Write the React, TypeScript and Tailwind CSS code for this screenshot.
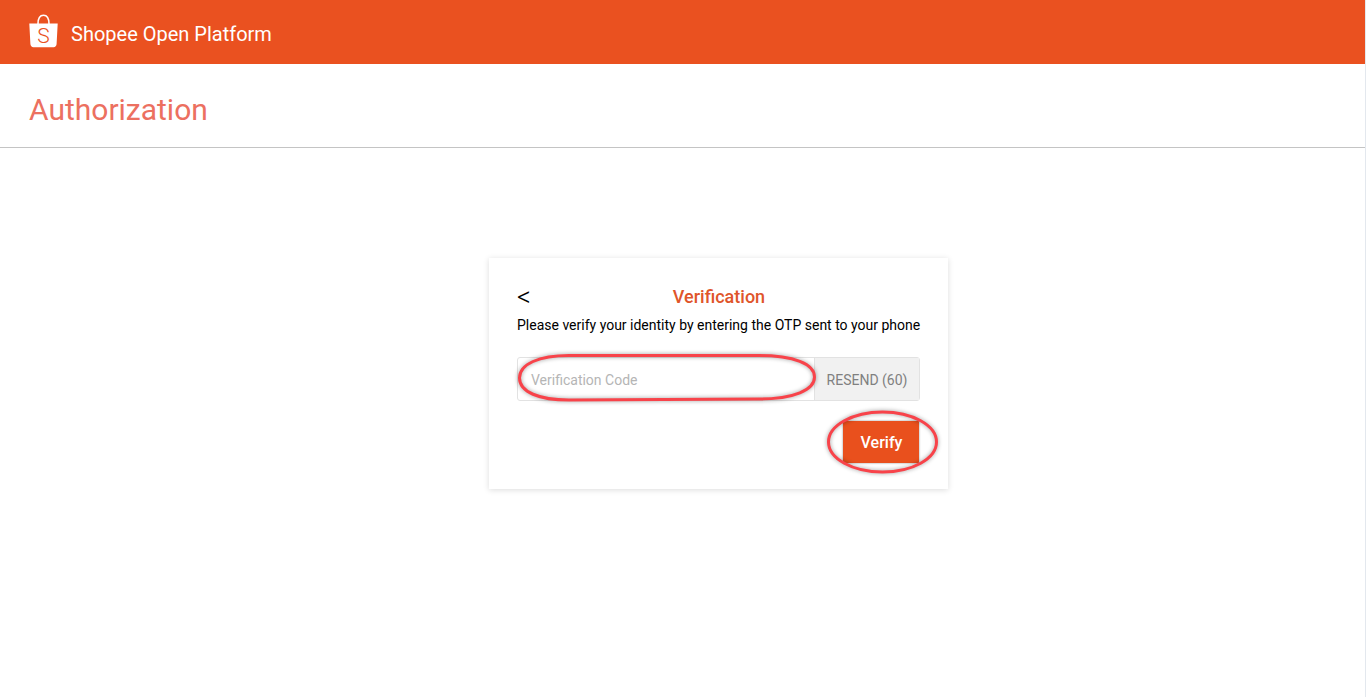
export default function App() {
  return (
    <div className="relative h-[697px] w-[1366px] overflow-hidden bg-white font-['Roboto',sans-serif]">
      <div className="h-full w-[1365px]">
        <header className="flex h-16 items-center bg-[#ea5120] pl-[29px] text-white">
          <svg width="29" height="34" viewBox="0 0 29 34" className="mb-[3px]" aria-hidden="true">
            <path d="M9 10 C9 4 11 1.2 14.5 1.2 C18 1.2 20 4 20 10" fill="none" stroke="#fff" strokeWidth="1.6" />
            <path d="M0.3 9.5 H28.7 L27.6 30 C27.5 32 26.3 33.2 24.6 33.2 H4.4 C2.7 33.2 1.5 32 1.4 30 Z" fill="#fff" />
            <text x="14.5" y="28.5" textAnchor="middle" fill="#ea5120" fontSize="21" fontFamily="Roboto, sans-serif" fontWeight="300">S</text>
          </svg>
          <span className="ml-[13px] pt-[4px] text-[20px] leading-none">Shopee Open Platform</span>
        </header>
        <div className="flex h-[84px] items-center border-b border-[#c4c4c4] pl-[29px]">
          <h1 className="pt-[9px] text-[30px] leading-none font-normal text-[#ec7060]">Authorization</h1>
        </div>
        <main className="flex justify-center pt-[110px] pl-[72px]">
          <div className="relative h-[231px] w-[459px] bg-white px-[28px] pt-[28px] shadow-[0_1px_6px_rgba(0,0,0,0.14)]">
            <div className="relative flex h-[22px] items-center justify-center">
              <span className="absolute top-0 left-0 text-[27px] leading-[22px] font-light text-black">&lt;</span>
              <h2 className="pl-[1px] text-[18px] leading-[22px] font-medium text-[#e0552a]">Verification</h2>
            </div>
            <p className="mt-[9px] text-[14px] leading-[16px] whitespace-nowrap text-black">
              Please verify your identity by entering the OTP sent to your phone
            </p>
            <div className="mt-[24px] flex h-[44px] w-[403px] rounded-[3px] border border-[#e2e2e2]">
              <div className="flex flex-1 items-center pt-[2px] pl-[13px] text-[14px] text-[#b5b5b5]">Verification Code</div>
              <div className="flex w-[105px] items-center justify-center border-l border-[#e2e2e2] bg-[#f1f1f1] pt-[2px] text-[14px] text-[#808080]">
                RESEND (60)
              </div>
            </div>
            <div className="mt-[20px] flex w-[402px] justify-end">
              <button className="flex h-[42px] w-[76px] items-center justify-center rounded-[1px] bg-[#e9501d] pt-[2px] pl-[1px] text-[16px] font-medium text-white shadow-[0_0_2px_rgba(0,0,0,0.5)]">
                Verify
              </button>
            </div>
            <svg width="459" height="231" className="pointer-events-none absolute top-0 left-0 overflow-visible" aria-hidden="true">
              <path d="M30.5 120 C30.5 106 50 97.5 80 97.5 L270 97.5 C305 97.5 325.5 106 325.5 119 C325.5 132 305 141 270 141 L80 142 C50 142 30.5 134 30.5 120 Z" fill="none" stroke="#f8434a" strokeWidth="3" style={{ filter: "drop-shadow(0 0 2px rgba(0,0,0,0.4))" }} />
              <ellipse cx="393.5" cy="184" rx="54" ry="30" fill="none" stroke="#f8434a" strokeWidth="3" style={{ filter: "drop-shadow(0 0 2px rgba(0,0,0,0.4))" }} />
            </svg>
          </div>
        </main>
      </div>
      <div className="absolute top-0 right-0 h-full w-px bg-[#e3e8ee]" />
    </div>
  );
}
